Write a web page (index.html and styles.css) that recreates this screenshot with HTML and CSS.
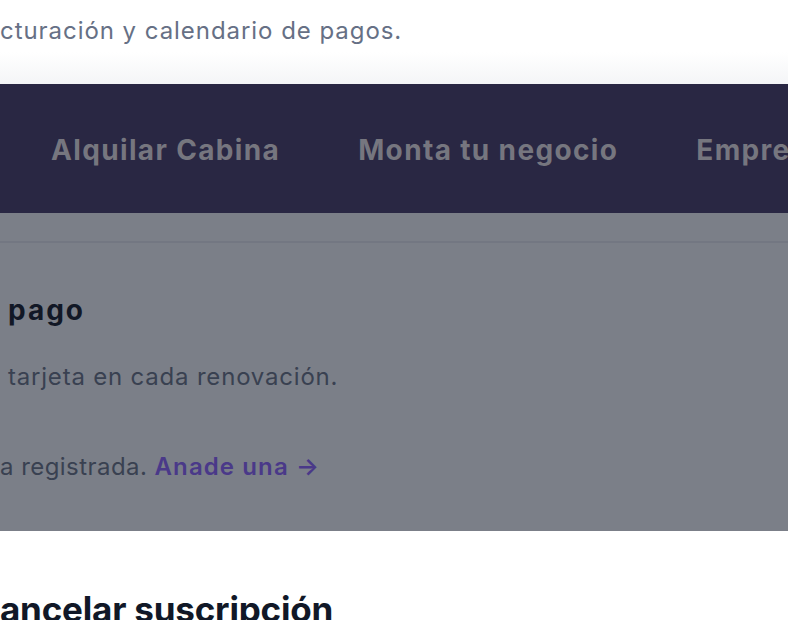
FILE: index.html
```html
<!DOCTYPE html>
<html lang="es">
    <head>
        <meta charset="UTF-8" />
        <meta name="viewport" content="width=device-width, initial-scale=1.0" />
        <title>Facturación</title>
        <link rel="stylesheet" href="styles.css">
    </head>
    <body>
        <div class="intro">
            <p class="intro-text">cturación y calendario de pagos.</p>
        </div>
        <nav class="topnav">
            <a href="#" class="nav-item">Alquilar Cabina</a>
            <a href="#" class="nav-item">Monta tu negocio</a>
            <a href="#" class="nav-item">Empresas</a>
        </nav>
        <!-- bloque de pago, bajo la capa oscura -->
        <section class="payment">
            <div class="payment-rule"></div>
            <h2 class="payment-title">pago</h2>
            <p class="payment-note">tarjeta en cada renovación.</p>
            <p class="payment-empty">a registrada. <a href="#" class="payment-link">Anade una →</a></p>
        </section>
        <section class="cancel">
            <h2 class="cancel-title">ancelar suscripción</h2>
        </section>
    </body>
</html>
```

FILE: styles.css
```css
*{
    box-sizing: border-box;
}
html, body{
    margin: 0;
    padding: 0;
    overflow: hidden;
}
body{
    width: 788px;
    height: 620px;
    font-family: Inter, "Noto Sans", sans-serif;
    background-color: #ffffff;
}
.intro{
    height: 84px;
    padding-top: 16px;
    background: linear-gradient(#ffffff 0px, #ffffff 52px, #f4f5f7 84px);
}
.intro-text{
    margin: 0;
    font-size: 24px;
    line-height: 30px;
    letter-spacing: 0.95px;
    color: #667085;
    white-space: nowrap;
}
.topnav{
    height: 129px;
    background-color: #292743;
    display: flex;
    align-items: center;
    gap: 78px;
    padding-left: 51px;
    padding-top: 2px;
    white-space: nowrap;
    overflow: hidden;
}
.nav-item{
    font-size: 28px;
    font-weight: 700;
    letter-spacing: 1.35px;
    color: #76767f;
    text-decoration: none;
}
.payment{
    height: 318px;
    background-color: #7b7f88;
    padding-top: 28px;
}
.payment-rule{
    height: 2px;
    background-color: #737782;
}
.payment-title{
    margin: 49px 0 0 0;
    padding-left: 8px;
    font-size: 28px;
    font-weight: 700;
    line-height: 36px;
    letter-spacing: 2px;
    color: #121826;
}
.payment-note{
    margin: 33px 0 0 0;
    padding-left: 8px;
    font-size: 24px;
    line-height: 32px;
    letter-spacing: 0.8px;
    color: #394151;
    white-space: nowrap;
}
.payment-empty{
    margin: 58px 0 0 0;
    font-size: 24px;
    line-height: 32px;
    letter-spacing: 0.45px;
    color: #394151;
    white-space: nowrap;
}
.payment-link{
    color: #4a3989;
    font-weight: 600;
    letter-spacing: 1.1px;
    text-decoration: none;
}
.cancel{
    padding-top: 56px;
}
.cancel-title{
    margin: 0;
    font-size: 35px;
    font-weight: 700;
    line-height: 44px;
    letter-spacing: -0.2px;
    color: #111827;
    white-space: nowrap;
}
```
